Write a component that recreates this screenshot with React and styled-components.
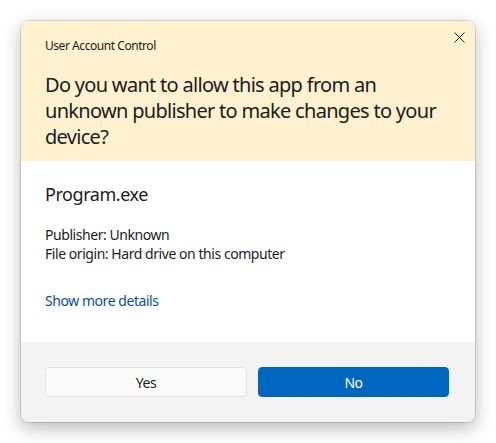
import React from 'react';
import styled, { createGlobalStyle } from 'styled-components';

const GlobalStyle = createGlobalStyle`
  html, body {
    margin: 0;
    padding: 0;
    background: #ffffff;
  }
  body {
    font-family: 'Noto Sans', 'Open Sans', sans-serif;
    letter-spacing: -0.028em;
    color: #1b1b1b;
  }
`;

const Page = styled.div`
  padding: 21px;
`;

const Dialog = styled.div`
  width: 454px;
  border-radius: 8px;
  overflow: hidden;
  box-shadow: 0 0 0 1px rgba(0, 0, 0, 0.12), 0 6px 18px rgba(0, 0, 0, 0.28);
`;

const Header = styled.div`
  position: relative;
  background: #fdf1cf;
  padding: 17px 24px 11px 24px;
  height: 140px;
  box-sizing: border-box;
`;

const Caption = styled.div`
  font-size: 12px;
  line-height: 16px;
`;

const Question = styled.h1`
  margin: 18px 0 0 0;
  font-size: 20px;
  font-weight: 400;
  line-height: 26px;
  width: 412px;
  letter-spacing: -0.035em;
`;

const CloseButton = styled.button`
  position: absolute;
  top: 4px;
  right: 4px;
  width: 24px;
  height: 24px;
  padding: 0;
  border: none;
  background: transparent;
  display: flex;
  align-items: center;
  justify-content: center;
  color: #1b1b1b;
`;

const Body = styled.div`
  background: #ffffff;
  padding: 21px 24px 30px 24px;
  height: 181px;
  box-sizing: border-box;
`;

const ProgramName = styled.div`
  font-size: 18px;
  line-height: 24px;
`;

const Details = styled.div`
  margin-top: 19px;
  font-size: 14px;
  line-height: 19px;
`;

const DetailsLink = styled.a`
  display: block;
  margin-top: 28px;
  font-size: 14px;
  line-height: 20px;
  color: #0b4b9e;
  text-decoration: none;
`;

const Footer = styled.div`
  background: #f3f3f3;
  height: 80px;
  box-sizing: border-box;
  padding: 25px 26px 0 24px;
  display: flex;
  gap: 11px;
`;

const Button = styled.button`
  height: 30px;
  width: ${(p) => p.$width}px;
  border-radius: 4px;
  font-family: inherit;
  letter-spacing: inherit;
  font-size: 14px;
  border: 1px solid ${(p) => (p.$primary ? '#0067c0' : '#e3e3e3')};
  background: ${(p) => (p.$primary ? '#0067c0' : '#fbfbfb')};
  color: ${(p) => (p.$primary ? '#ffffff' : '#1b1b1b')};
  padding: 0;
`;

export default function App() {
  return (
    <Page>
      <GlobalStyle />
      <Dialog>
        <Header>
          <Caption>User Account Control</Caption>
          <Question>
            Do you want to allow this app from an unknown publisher to make changes to your device?
          </Question>
          <CloseButton aria-label="Close">
            <svg width="11" height="11" viewBox="0 0 11 11">
              <path d="M0.5 0.5 L10.5 10.5 M10.5 0.5 L0.5 10.5" stroke="currentColor" strokeWidth="1" fill="none" />
            </svg>
          </CloseButton>
        </Header>
        <Body>
          <ProgramName>Program.exe</ProgramName>
          <Details>
            <div>Publisher: Unknown</div>
            <div>File origin: Hard drive on this computer</div>
          </Details>
          <DetailsLink href="#">Show more details</DetailsLink>
        </Body>
        <Footer>
          <Button $width={202}>Yes</Button>
          <Button $width={191} $primary>No</Button>
        </Footer>
      </Dialog>
    </Page>
  );
}
